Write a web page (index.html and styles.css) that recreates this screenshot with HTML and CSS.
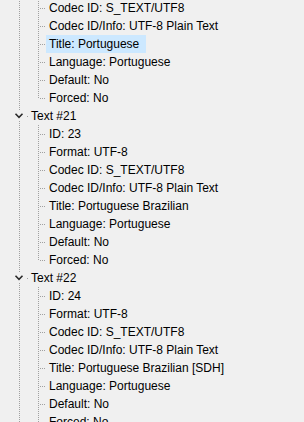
FILE: index.html
```html
<!DOCTYPE html>
<html>
<head>
<meta charset="utf-8">
<link rel="stylesheet" href="styles.css">
</head>
<body>
<div class="tree">
  <ul class="kids">
    <li class="leaf"><span class="label">Codec ID: S_TEXT/UTF8</span></li>
    <li class="leaf"><span class="label">Codec ID/Info: UTF-8 Plain Text</span></li>
    <li class="leaf"><span class="label sel">Title: Portuguese</span></li>
    <li class="leaf"><span class="label">Language: Portuguese</span></li>
    <li class="leaf"><span class="label">Default: No</span></li>
    <li class="leaf"><span class="label">Forced: No</span></li>
  </ul>
  <div class="node">
    <svg class="chev" width="11" height="10" viewBox="0 0 11 10"><polyline points="1.5,2.8 5,6.3 8.5,2.8" fill="none" stroke="#2a2a2a" stroke-width="1.6"/></svg>
    <span class="label">Text #21</span>
  </div>
  <ul class="kids">
    <li class="leaf"><span class="label">ID: 23</span></li>
    <li class="leaf"><span class="label">Format: UTF-8</span></li>
    <li class="leaf"><span class="label">Codec ID: S_TEXT/UTF8</span></li>
    <li class="leaf"><span class="label">Codec ID/Info: UTF-8 Plain Text</span></li>
    <li class="leaf"><span class="label">Title: Portuguese Brazilian</span></li>
    <li class="leaf"><span class="label">Language: Portuguese</span></li>
    <li class="leaf"><span class="label">Default: No</span></li>
    <li class="leaf"><span class="label">Forced: No</span></li>
  </ul>
  <div class="node">
    <svg class="chev" width="11" height="10" viewBox="0 0 11 10"><polyline points="1.5,2.8 5,6.3 8.5,2.8" fill="none" stroke="#2a2a2a" stroke-width="1.6"/></svg>
    <span class="label">Text #22</span>
  </div>
  <ul class="kids">
    <li class="leaf"><span class="label">ID: 24</span></li>
    <li class="leaf"><span class="label">Format: UTF-8</span></li>
    <li class="leaf"><span class="label">Codec ID: S_TEXT/UTF8</span></li>
    <li class="leaf"><span class="label">Codec ID/Info: UTF-8 Plain Text</span></li>
    <li class="leaf"><span class="label">Title: Portuguese Brazilian [SDH]</span></li>
    <li class="leaf"><span class="label">Language: Portuguese</span></li>
    <li class="leaf"><span class="label">Default: No</span></li>
    <li class="leaf"><span class="label">Forced: No</span></li>
  </ul>
</div>
</body>
</html>
```
FILE: styles.css
```css
html, body {
  margin: 0;
  padding: 0;
  background: #f0f0f0;
  overflow: hidden;
}
body {
  width: 304px;
  height: 422px;
  font-family: "Liberation Sans", Arial, sans-serif;
  font-size: 12px;
  color: #000;
}
.tree {
  margin-top: -1px;
  background-image: repeating-linear-gradient(to bottom, #a0a0a0 0 1px, transparent 1px 2px);
  background-repeat: no-repeat;
  background-position: 19px 0;
  background-size: 1px 100%;
}
.kids {
  list-style: none;
  margin: 0;
  padding: 0;
  background-image: repeating-linear-gradient(to bottom, #a0a0a0 0 1px, transparent 1px 2px);
  background-repeat: no-repeat;
  background-position: 38px 0;
  background-size: 1px calc(100% - 9px);
}
.leaf {
  height: 18px;
  display: flex;
  align-items: center;
  padding-left: 46px;
  background-image: repeating-linear-gradient(to right, #a0a0a0 0 1px, transparent 1px 2px);
  background-repeat: no-repeat;
  background-position: 40px 9px;
  background-size: 6px 1px;
}
.label {
  display: block;
  height: 18px;
  line-height: 18px;
  padding: 0 5px 0 3px;
  white-space: nowrap;
}
.sel {
  background: #cce8ff;
  padding-right: 7px;
}
.node {
  height: 18px;
  display: flex;
  align-items: center;
  padding-left: 14px;
  background-image: linear-gradient(#a0a0a0, #a0a0a0);
  background-repeat: no-repeat;
  background-position: 27px 9px;
  background-size: 1px 1px;
}
.chev {
  display: block;
  background: #f0f0f0;
  margin-right: 4px;
}
.node .label {
  padding-left: 2px;
}
```
